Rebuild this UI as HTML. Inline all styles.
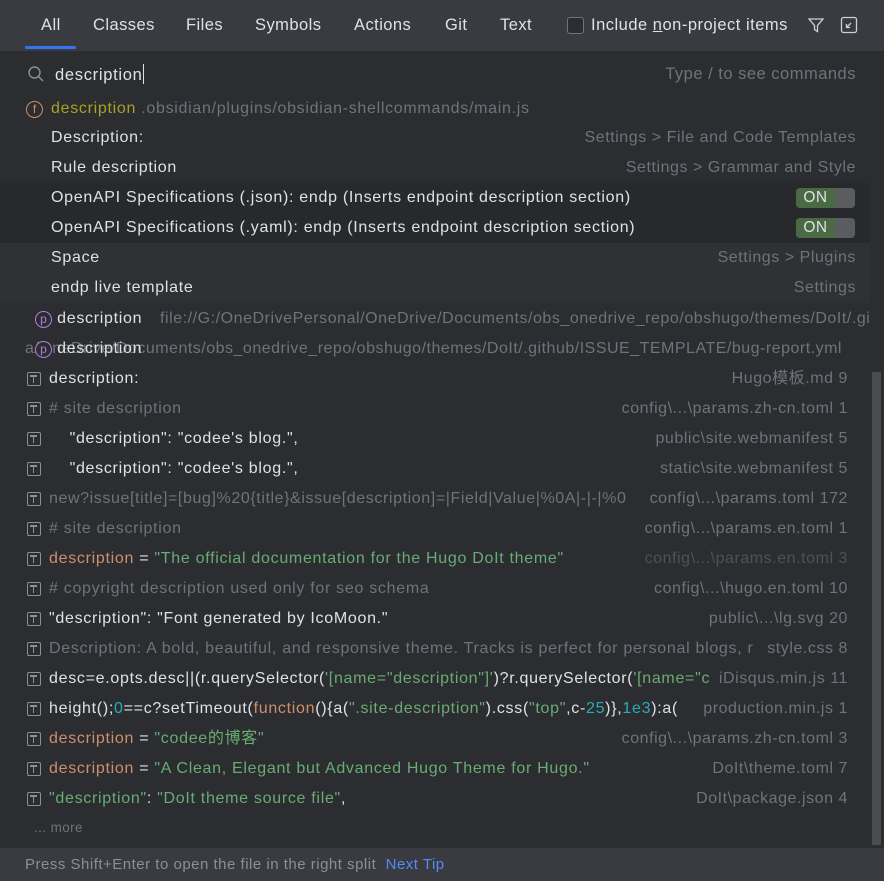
<!DOCTYPE html>
<html><head><meta charset="utf-8"><style>
*{margin:0;padding:0;box-sizing:border-box}
body{width:884px;height:881px;background:#2b2d30;font-family:"Liberation Sans","Noto Sans CJK SC",sans-serif;font-size:16px;letter-spacing:0.7px;color:#dfe1e5;position:relative;overflow:hidden}
.hdr{position:absolute;left:0;top:0;width:884px;height:51px;background:#393b40}
.tab{position:absolute;top:16px;color:#dfe1e5;font-size:16.5px;letter-spacing:0.45px}
.ul{position:absolute;left:25px;top:46px;width:51px;height:3px;background:#3574f0;border-radius:2px}
.search{position:absolute;left:0;top:51px;width:884px;height:46px;background:#2b2d30}
.line{position:absolute;left:15px;top:96px;width:814px;height:1px;background:#393b40}
.row{position:absolute;left:0;width:870px;height:30px;line-height:30px;white-space:nowrap;overflow:hidden;display:flex;align-items:center}
.r{position:absolute;right:14px;top:0;color:#6f737a;background:inherit;letter-spacing:0.55px}
.t .r{right:22px;background:#2b2d30}
.g{color:#6aab73}.o{color:#cf8e6d}.m{color:#6f737a}.c{color:#2aacb8}
.ti{flex:none;display:inline-block;width:14px;height:14px;border:1.5px solid #8c8f94;border-radius:2px;margin:0 8px 0 27px;position:relative}
.ti:before{content:"";position:absolute;left:2px;top:2px;width:7px;height:1.5px;background:#8c8f94}
.ti:after{content:"";position:absolute;left:4.8px;top:2px;width:1.5px;height:8px;background:#8c8f94}
.pi{flex:none;display:inline-block;width:17px;height:17px;border:1.5px solid #b07fd9;border-radius:50%;color:#b07fd9;font-size:12px;line-height:14px;text-align:center;letter-spacing:0}
.tog{position:absolute;right:15px;top:5px;width:59px;height:20px;border-radius:4px;background:#5a5c60;overflow:hidden}
.tog span{position:absolute;left:0;top:0;width:39px;height:20px;background:#4a6a44;color:#dfe1e5;line-height:20px;text-align:center;font-size:15.5px;letter-spacing:0.5px}
</style></head><body>
<div class="hdr">
<span class="tab" style="left:41px">All</span>
<span class="tab" style="left:93px">Classes</span>
<span class="tab" style="left:186px">Files</span>
<span class="tab" style="left:255px">Symbols</span>
<span class="tab" style="left:354px">Actions</span>
<span class="tab" style="left:445px">Git</span>
<span class="tab" style="left:500px">Text</span>
<div style="position:absolute;left:567px;top:17px;width:17px;height:17px;border:1.5px solid #6f737a;border-radius:3px;background:#2b2d30"></div>
<span class="tab" style="left:591px;letter-spacing:0.5px">Include <u>n</u>on-project items</span>
<svg style="position:absolute;left:807px;top:16px" width="18" height="18" viewBox="0 0 18 18"><path d="M2 3h14l-5.5 6.5v6l-3-2v-4z" fill="none" stroke="#ced0d6" stroke-width="1.3"/></svg>
<svg style="position:absolute;left:840px;top:16px" width="18" height="18" viewBox="0 0 18 18"><rect x="1.5" y="1.5" width="15" height="15" rx="2" fill="none" stroke="#ced0d6" stroke-width="1.3"/><path d="M11 7L6.5 11.5M6.5 8v3.5H10" fill="none" stroke="#ced0d6" stroke-width="1.3"/></svg>
<div class="ul"></div>
</div>
<div class="search">
<svg style="position:absolute;left:27px;top:14px" width="18" height="18" viewBox="0 0 18 18"><circle cx="7.5" cy="7.5" r="5.5" fill="none" stroke="#8c8f94" stroke-width="1.4"/><path d="M11.5 11.5l4.5 4.5" stroke="#8c8f94" stroke-width="1.4"/></svg>
<span style="position:absolute;left:55px;top:13px;font-size:16.5px;letter-spacing:0.7px">description<span style="display:inline-block;width:1px;height:20px;background:#dfe1e5;vertical-align:-4px"></span></span>
<span style="position:absolute;right:28px;top:14px;color:#6f737a;font-size:16.5px;letter-spacing:0.5px">Type / to see commands</span>
</div>
<div class="line"></div>

<div class="row" style="top:94px;background:#2b2d30"><span style="flex:none;display:inline-block;width:17px;height:17px;border:1.5px solid #cf8e6d;border-radius:50%;color:#cf8e6d;font-size:12px;line-height:14px;text-align:center;margin-left:26px;margin-right:8px;letter-spacing:0">f</span><span style="color:#a7a324">description</span>&nbsp;<span class="m">.obsidian/plugins/obsidian-shellcommands/main.js</span></div>
<div class="row" style="top:123px;background:#2b2d30;padding-left:51px">Description:<span class="r">Settings &gt; File and Code Templates</span></div>
<div class="row" style="top:153px;background:#2b2d30;padding-left:51px">Rule description<span class="r">Settings &gt; Grammar and Style</span></div>
<div class="row" style="top:183px;background:#27292c;padding-left:51px">OpenAPI Specifications (.json): endp (Inserts endpoint description section)<div class="tog"><span>ON</span></div></div>
<div class="row" style="top:213px;background:#27292c;padding-left:51px">OpenAPI Specifications (.yaml): endp (Inserts endpoint description section)<div class="tog"><span>ON</span></div></div>
<div class="row" style="top:243px;background:#2f3135;padding-left:51px">Space<span class="r">Settings &gt; Plugins</span></div>
<div class="row" style="top:273px;background:#2f3135;padding-left:51px">endp live template<span class="r">Settings</span></div>
<div class="row" style="top:304px;padding-left:35px"><span class="pi">p</span>&nbsp;description<span class="m" style="position:absolute;left:160px;letter-spacing:0.55px">file://G:/OneDrivePersonal/OneDrive/Documents/obs_onedrive_repo/obshugo/themes/DoIt/.github</span></div>
<div class="row" style="top:334px"><span class="m" style="position:absolute;left:25px;letter-spacing:0.5px">a/OneDrive/Documents/obs_onedrive_repo/obshugo/themes/DoIt/.github/ISSUE_TEMPLATE/bug-report.yml</span><span style="position:absolute;left:35px;display:flex;align-items:center;height:30px"><span class="pi" style="background:#2b2d30">p</span>&nbsp;description</span></div>

<div class="row t" style="top:364px"><span class="ti"></span>description:<span class="r">Hugo模板.md 9</span></div>
<div class="row t" style="top:394px"><span class="ti"></span><span class="m"># site description</span><span class="r">config\...\params.zh-cn.toml 1</span></div>
<div class="row t" style="top:424px"><span class="ti"></span>&nbsp;&nbsp;&nbsp;&nbsp;"description": "codee's blog.",<span class="r">public\site.webmanifest 5</span></div>
<div class="row t" style="top:454px"><span class="ti"></span>&nbsp;&nbsp;&nbsp;&nbsp;"description": "codee's blog.",<span class="r">static\site.webmanifest 5</span></div>
<div class="row t" style="top:484px"><span class="ti"></span><span class="m" style="letter-spacing:0.6px">new?issue[title]=[bug]%20{title}&amp;issue[description]=|Field|Value|%0A|-|-|%0</span><span class="r">&nbsp; config\...\params.toml 172</span></div>
<div class="row t" style="top:514px"><span class="ti"></span><span class="m"># site description</span><span class="r">config\...\params.en.toml 1</span></div>
<div class="row t" style="top:544px"><span class="ti"></span><span class="o">description</span>&nbsp;=&nbsp;<span class="g">"The official documentation for the Hugo DoIt theme"</span><span class="r" style="color:#4e5157">config\...\params.en.toml 3</span></div>
<div class="row t" style="top:574px"><span class="ti"></span><span class="m"># copyright description used only for seo schema</span><span class="r">config\...\hugo.en.toml 10</span></div>
<div class="row t" style="top:604px"><span class="ti"></span>"description": "Font generated by IcoMoon."<span class="r">public\...\lg.svg 20</span></div>
<div class="row t" style="top:634px"><span class="ti"></span><span class="m">Description: A bold, beautiful, and responsive theme. Tracks is perfect for personal blogs, r</span><span class="r">&nbsp; style.css 8</span></div>
<div class="row t" style="top:664px"><span class="ti"></span>desc=e.opts.desc||(r.querySelector(<span class="g">'[name="description"]'</span>)?r.querySelector(<span class="g">'[name="c</span><span class="r">&nbsp; iDisqus.min.js 11</span></div>
<div class="row t" style="top:694px"><span class="ti"></span>height();<span class="c">0</span>==c?setTimeout(<span class="o">function</span>(){a(<span class="g">".site-description"</span>).css(<span class="g">"top"</span>,c-<span class="c">25</span>)},<span class="c">1e3</span>):a(<span class="r">&nbsp;&nbsp; production.min.js 1</span></div>
<div class="row t" style="top:724px"><span class="ti"></span><span class="o">description</span>&nbsp;=&nbsp;<span class="g">"codee的博客"</span><span class="r">config\...\params.zh-cn.toml 3</span></div>
<div class="row t" style="top:754px"><span class="ti"></span><span class="o">description</span>&nbsp;=&nbsp;<span class="g">"A Clean, Elegant but Advanced Hugo Theme for Hugo."</span><span class="r">DoIt\theme.toml 7</span></div>
<div class="row t" style="top:784px"><span class="ti"></span><span class="g">"description"</span>:&nbsp;<span class="g">"DoIt theme source file"</span>,<span class="r">DoIt\package.json 4</span></div>
<div style="position:absolute;left:34px;top:820px;font-size:13.5px;color:#6f737a;letter-spacing:0.4px">... more</div>
<div style="position:absolute;left:872px;top:372px;width:9px;height:473px;background:#4a4c50;border-radius:1px"></div>
<div style="position:absolute;left:0;top:848px;width:884px;height:33px;background:#393b40;font-size:15px;letter-spacing:0.5px;line-height:33px;padding-left:25px;color:#8c8f94">Press Shift+Enter to open the file in the right split &nbsp;<span style="color:#548af7">Next Tip</span></div>
</body></html>
